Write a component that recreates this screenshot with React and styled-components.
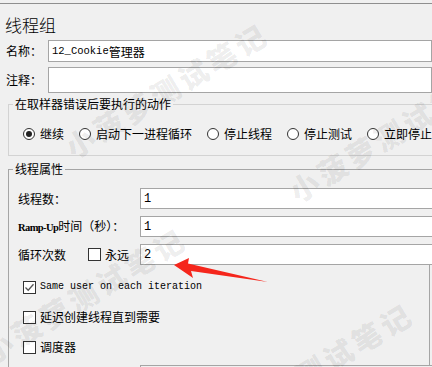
import React from 'react'
import styled, { createGlobalStyle } from 'styled-components'

const GlobalStyle = createGlobalStyle`
  html, body { margin: 0; padding: 0; background: #f0f0f0; }
  body {
    font-family: "Noto Sans CJK SC", "Liberation Sans", sans-serif;
    font-size: 12px;
    color: #000;
    overflow: hidden;
  }
`

const Page = styled.div`
  position: relative;
  width: 432px;
  height: 367px;
  overflow: hidden;
  background: #f0f0f0;
`
const TopRule = styled.div`
  margin-top: 3px;
  border-top: 1px solid #8f8f8f;
`
const Title = styled.div`
  margin: 11px 0 0 5px;
  font-size: 17px;
  line-height: 20px;
  font-weight: 300;
`
const FieldRow = styled.div`
  display: flex;
  align-items: center;
  margin-top: 5px;
  padding-left: 6px;
`
const FieldLabel = styled.span`
  width: 42px;
  flex: none;
  line-height: 16px;
`
const TextBox = styled.div`
  flex: 1;
  height: ${p => p.$h || 21}px;
  box-sizing: border-box;
  border: 1px solid #a5a5a5;
  background: #fff;
  display: flex;
  align-items: center;
  padding-left: 3px;
  font-family: "Liberation Mono", monospace;
  font-size: ${p => p.$fs || 12}px;
  white-space: nowrap;
`
const Cjk = styled.span`
  font-family: "Noto Sans CJK SC", sans-serif;
  font-size: 12px;
`
const Group = styled.fieldset`
  margin: ${p => p.$mt}px -20px 0 8px;
  padding: 0 6px ${p => p.$pb}px;
  border: 1px solid ${p => p.$line};
  min-width: 0;
`
const Legend = styled.legend`
  padding: 0 2px;
  margin-left: -2px;
  line-height: 16px;
`
const RadioRow = styled.div`
  display: flex;
  align-items: center;
  gap: 15px;
  height: 16px;
  margin-top: 14px;
  padding-left: 8px;
  white-space: nowrap;
`
const Option = styled.label`
  display: flex;
  align-items: center;
  gap: ${p => p.$gap || 5}px;
  flex: none;
  line-height: 16px;
  font-family: ${p => (p.$mono ? '"Liberation Mono", monospace' : 'inherit')};
  font-size: ${p => (p.$mono ? 10 : 12)}px;
`
const RadioDot = styled.span`
  position: relative;
  width: 12px;
  height: 12px;
  box-sizing: border-box;
  border: 1px solid #333;
  border-radius: 50%;
  background: #fff;
  flex: none;
  &::after {
    content: '';
    position: absolute;
    inset: 2px;
    border-radius: 50%;
    background: ${p => (p.$on ? '#222' : 'transparent')};
  }
`
const Check = styled.span`
  width: 13px;
  height: 13px;
  box-sizing: border-box;
  border: 1px solid #333;
  background: #fff;
  flex: none;
  display: flex;
  align-items: center;
  justify-content: center;
`
const PropGrid = styled.div`
  display: grid;
  grid-template-columns: 122px 1fr;
  grid-auto-rows: 21px;
  row-gap: 7px;
  align-items: center;
  margin-top: 11px;
  padding-left: 3px;
`
const PropLabel = styled.div`
  display: flex;
  align-items: center;
  gap: 22px;
  line-height: 16px;
  white-space: nowrap;
`
const Latin = styled.span`
  font-family: "Liberation Serif", serif;
  font-size: 10.5px;
  font-weight: 700;
  letter-spacing: -0.6px;
`
const CheckArea = styled.div`
  display: flex;
  flex-direction: column;
  gap: 14px;
  margin-right: 15px;
  padding: 14px 0 10px 8px;
  border-right: 1px solid #a5a5a5;
`
const CheckRow = styled.div`
  display: flex;
  align-items: center;
  height: 16px;
`
const BottomBox = styled.div`
  margin-left: 125px;
  height: 20px;
  border-top: 1px solid #a5a5a5;
  border-left: 1px solid #a5a5a5;
`
const Overlay = styled.svg`
  position: absolute;
  left: 0;
  top: 0;
  pointer-events: none;
`
const Watermark = styled.span`
  position: absolute;
  left: ${p => p.$x}px;
  top: ${p => p.$y}px;
  transform: translate(-50%, -50%) rotate(-31deg);
  font-size: 29px;
  font-weight: 900;
  letter-spacing: 4px;
  color: rgba(0, 0, 0, 0.085);
  white-space: nowrap;
  pointer-events: none;
`

const actions = ['继续', '启动下一进程循环', '停止线程', '停止测试', '立即停止当前线程']
const marks = [
  { x: 166, y: 89 },
  { x: 390, y: 133 },
  { x: 84, y: 294 },
  { x: 311, y: 369 },
]

const CheckMark = () => (
  <svg width="11" height="11" viewBox="0 0 11 11">
    <polyline points="1.5,5.5 4.2,8.2 9.5,2.2" fill="none" stroke="#555" strokeWidth="1.3" />
  </svg>
)

const App = () => {
  return (
    <Page>
      <GlobalStyle />
      <TopRule />
      <Title>线程组</Title>
      <FieldRow>
        <FieldLabel>名称：</FieldLabel>
        <TextBox $h={22} $fs={10.5}>12_Cookie<Cjk>管理器</Cjk></TextBox>
      </FieldRow>
      <FieldRow>
        <FieldLabel>注释：</FieldLabel>
        <TextBox $h={26} />
      </FieldRow>

      <Group $mt={3} $pb={13} $line="#d3d3d3">
        <Legend>在取样器错误后要执行的动作</Legend>
        <RadioRow>
          {actions.map((a, i) => (
            <Option key={a}>
              <RadioDot $on={i === 0} />
              {a}
            </Option>
          ))}
        </RadioRow>
      </Group>

      <Group $mt={5} $pb={0} $line="#a5a5a5">
        <Legend>线程属性</Legend>
        <PropGrid>
          <PropLabel>线程数：</PropLabel>
          <TextBox>1</TextBox>
          <PropLabel><span><Latin>Ramp-Up</Latin>时间（秒）：</span></PropLabel>
          <TextBox>1</TextBox>
          <PropLabel>
            循环次数
            <Option $gap={4}><Check />永远</Option>
          </PropLabel>
          <TextBox>2</TextBox>
        </PropGrid>
        <CheckArea>
          <CheckRow>
            <Option $mono $gap={4}><Check><CheckMark /></Check>Same user on each iteration</Option>
          </CheckRow>
          <CheckRow>
            <Option $gap={4}><Check />延迟创建线程直到需要</Option>
          </CheckRow>
          <CheckRow>
            <Option $gap={4}><Check />调度器</Option>
          </CheckRow>
        </CheckArea>
        <BottomBox />
      </Group>

      {marks.map((m, i) => (
        <Watermark key={i} $x={m.x} $y={m.y}>小菠萝测试笔记</Watermark>
      ))}

      <Overlay width="432" height="367" viewBox="0 0 432 367">
        <polygon
          points="174,265 189,258 188,263.5 268,282 191,271 193,278"
          fill="#f5261c"
        />
      </Overlay>
    </Page>
  )
}

export default App
